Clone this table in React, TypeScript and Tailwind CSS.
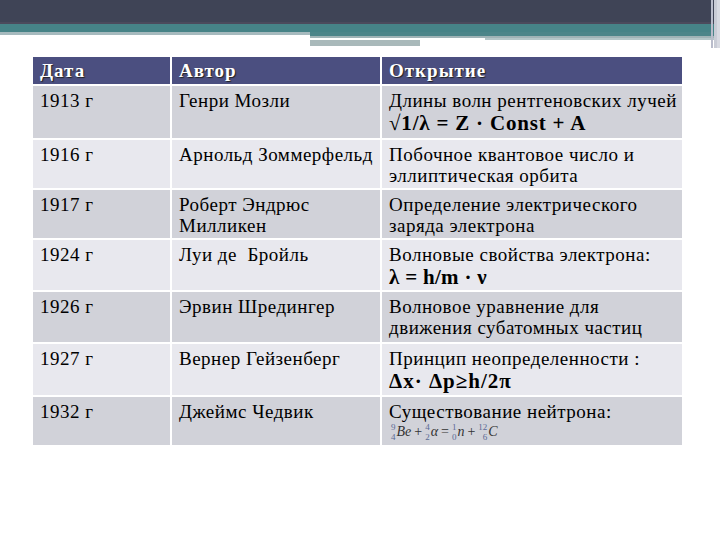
import React from 'react';

const rows = [
  { year: '1913 г', author: ['Генри Мозли'], text: ['Длины волн рентгеновских лучей'], formula: '√1/λ = Z · Const + A', ft: 'tracking-[0.8px]', h: 'h-[54px]' },
  { year: '1916 г', author: ['Арнольд Зоммерфельд'], text: ['Побочное квантовое число и', 'эллиптическая орбита'], h: 'h-[50px]' },
  { year: '1917 г', author: ['Роберт Эндрюс', 'Милликен'], text: ['Определение электрического', 'заряда электрона'], h: 'h-[50px]' },
  { year: '1924 г', author: ['Луи де  Бройль'], text: ['Волновые свойства электрона:'], formula: 'λ = h/m · ν', ft: 'tracking-[0.3px]', h: 'h-[52px]' },
  { year: '1926 г', author: ['Эрвин Шредингер'], text: ['Волновое уравнение для', 'движения субатомных частиц'], h: 'h-[52px]' },
  { year: '1927 г', author: ['Вернер Гейзенберг'], text: ['Принцип неопределенности :'], formula: 'Δx· Δp≥h/2π', ft: 'tracking-[1px]', h: 'h-[53px]' },
  { year: '1932 г', author: ['Джеймс Чедвик'], text: ['Существование нейтрона:'], nuclear: true, h: 'h-[50px]' },
];

function Nuclide({ top, bottom, sym }: { top: string; bottom: string; sym: string }) {
  return (
    <span className="inline-flex items-center">
      <span className="inline-flex flex-col items-end text-[9px] leading-[10px] not-italic text-[#5a6a96]">
        <span>{top}</span>
        <span>{bottom}</span>
      </span>
      <span className="ml-px">{sym}</span>
    </span>
  );
}

export default function App() {
  return (
    <div className="relative w-[720px] h-[540px] bg-white overflow-hidden" style={{ fontFamily: '"Liberation Serif", serif' }}>
      {/* header bars */}
      <div className="h-[22px] bg-[#3f4456]" />
      <div className="h-[2px] bg-[#4b4a5c]" />
      <div className="h-[8px] bg-[#468387]" />
      <div className="flex">
        <div className="w-[310px] h-[3px] bg-[#a6babe]" />
        <div className="flex-1 flex flex-col">
          <div className="h-[4px] bg-[#4c8589]" />
          <div className="h-[2px] bg-[#9fb3b6]" />
          <div className="flex h-[2px]">
            <div className="w-[175px] bg-white" />
            <div className="flex-1 bg-[#b4c6c8]" />
          </div>
          <div className="flex h-[6px]">
            <div className="w-[110px] bg-[#a9b9ba]" />
            <div className="flex-1 bg-white" />
          </div>
        </div>
      </div>
      <div className="absolute right-[7px] top-0 w-[2px] h-[48px] bg-[#b9bccb]" />
      <div className="absolute right-[3px] top-0 w-[3px] h-[48px] bg-[#c9ccd6]" />
      <div className="absolute right-0 top-0 w-[3px] h-[48px] bg-[#d8dae2]" />

      {/* table */}
      <div className="absolute left-[33px] top-[57px] w-[649px] bg-white text-[19px] leading-[21px] tracking-[0.5px] text-black">
        <div className="grid grid-cols-[139px_210px_300px] h-[27px] bg-[#4b4f80] text-white font-bold tracking-[1px] [text-shadow:1px_1px_1px_#222]">
          <div className="pl-[7px] pt-[3px] border-r-2 border-white">Дата</div>
          <div className="pl-[7px] pt-[3px] border-r-2 border-white">Автор</div>
          <div className="pl-[7px] pt-[3px]">Открытие</div>
        </div>
        {rows.map((r, i) => (
          <div
            key={r.year}
            className={`grid grid-cols-[139px_210px_300px] border-t-2 border-white ${r.h} ${i % 2 === 0 ? 'bg-[#d1d2d9]' : 'bg-[#e8e8ee]'}`}
          >
            <div className="pl-[7px] pt-[4px] border-r-2 border-white">{r.year}</div>
            <div className="pl-[7px] pt-[4px] border-r-2 border-white">
              {r.author.map((a) => (
                <div key={a} className="whitespace-pre">{a}</div>
              ))}
            </div>
            <div className="pl-[7px] pt-[4px]">
              {r.text.map((t) => (
                <div key={t} className="whitespace-nowrap">{t}</div>
              ))}
              {r.formula && <div className={`font-bold text-[21px] leading-[24px] ${r.ft}`}>{r.formula}</div>}
              {r.nuclear && (
                <div className="flex items-center gap-[3px] pl-[2px] text-[14px] leading-[20px] tracking-normal italic text-[#333]">
                  <Nuclide top="9" bottom="4" sym="Be" />
                  <span className="not-italic">+</span>
                  <Nuclide top="4" bottom="2" sym="α" />
                  <span className="not-italic">=</span>
                  <Nuclide top="1" bottom="0" sym="n" />
                  <span className="not-italic">+</span>
                  <Nuclide top="12" bottom="6" sym="C" />
                </div>
              )}
            </div>
          </div>
        ))}
      </div>
    </div>
  );
}
